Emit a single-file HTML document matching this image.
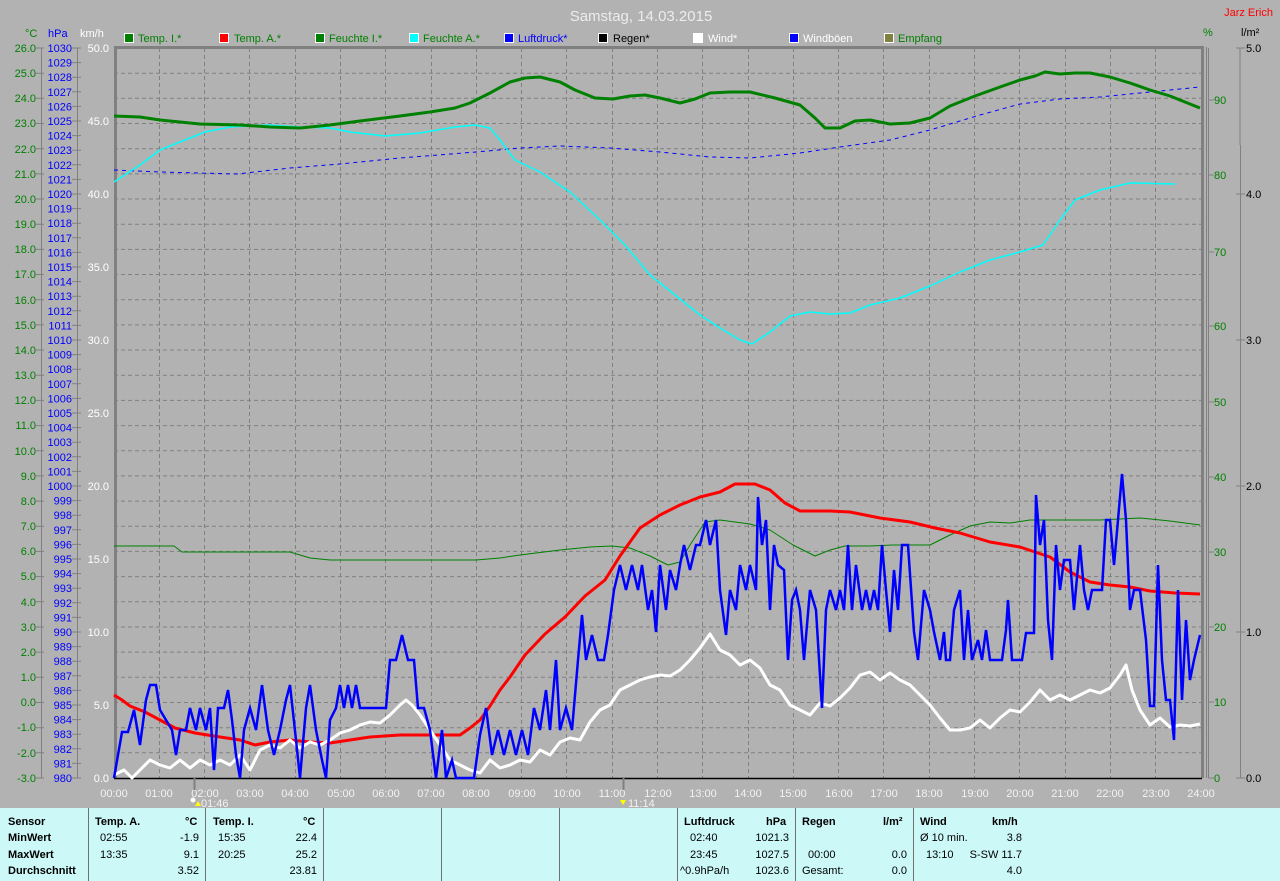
<!DOCTYPE html>
<html><head><meta charset="utf-8"><style>
body{margin:0;background:#b2b2b2;width:1280px;height:881px;overflow:hidden;font-family:"Liberation Sans",sans-serif}
svg{position:absolute;left:0;top:0}
#tbl{position:absolute;left:0;top:808px;width:1280px;height:73px;background:#ccf8f8;font-size:11px;color:#000}
#tbl div{position:absolute;white-space:nowrap}
.v{position:absolute;top:0;width:1px;height:73px;background:#707070}
.b{font-weight:bold}
</style></head><body>
<svg width="1280" height="808" font-family="Liberation Sans, sans-serif" font-size="11">
<text x="641" y="21" text-anchor="middle" font-size="15" fill="#ececec">Samstag, 14.03.2015</text>
<text x="1273" y="16" text-anchor="end" fill="#f00" font-size="11">Jarz Erich</text>
<!-- legend -->
<g font-size="11">
<rect x="124.5" y="33.5" width="9" height="9" fill="#008000" stroke="#fff"/><text x="138" y="42" fill="#008000">Temp. I.*</text>
<rect x="219.5" y="33.5" width="9" height="9" fill="#f00" stroke="#fff"/><text x="234" y="42" fill="#008000">Temp. A.*</text>
<rect x="315.5" y="33.5" width="9" height="9" fill="#008000" stroke="#fff"/><text x="329" y="42" fill="#008000">Feuchte I.*</text>
<rect x="409.5" y="33.5" width="9" height="9" fill="#0ff" stroke="#fff"/><text x="423" y="42" fill="#008000">Feuchte A.*</text>
<rect x="504.5" y="33.5" width="9" height="9" fill="#00f" stroke="#fff"/><text x="518" y="42" fill="#00f">Luftdruck*</text>
<rect x="598.5" y="33.5" width="9" height="9" fill="#000" stroke="#fff"/><text x="613" y="42" fill="#000">Regen*</text>
<rect x="693.5" y="33.5" width="9" height="9" fill="#fff" stroke="#fff"/><text x="708" y="42" fill="#fff">Wind*</text>
<rect x="789.5" y="33.5" width="9" height="9" fill="#00f" stroke="#fff"/><text x="803" y="42" fill="#fff">Windböen</text>
<rect x="884.5" y="33.5" width="9" height="9" fill="#808040" stroke="#fff"/><text x="898" y="42" fill="#008000">Empfang</text>
</g>
<text x="25" y="37" fill="#008000">°C</text><text x="48" y="37" fill="#00f">hPa</text><text x="80" y="37" fill="#fff">km/h</text>
<text x="1203" y="36" fill="#008000">%</text><text x="1241" y="36" fill="#000">l/m²</text>
<!-- grid -->
<g stroke="#808080" stroke-dasharray="4,3" stroke-width="1">
<path d="M114 73.2H1201M114 98.3H1201M114 123.5H1201M114 148.7H1201M114 173.9H1201M114 199H1201M114 224.2H1201M114 249.4H1201M114 274.5H1201M114 299.7H1201M114 324.9H1201M114 350H1201M114 375.2H1201M114 400.4H1201M114 425.6H1201M114 450.8H1201M114 475.9H1201M114 501.1H1201M114 526.3H1201M114 551.4H1201M114 576.6H1201M114 601.8H1201M114 627H1201M114 652.1H1201M114 677.3H1201M114 702.5H1201M114 727.7H1201M114 752.8H1201"/>
<path d="M159.5 48V778M204.5 48V778M249.5 48V778M295.5 48V778M340.5 48V778M385.5 48V778M431.5 48V778M476.5 48V778M521.5 48V778M566.5 48V778M612.5 48V778M657.5 48V778M702.5 48V778M748.5 48V778M793.5 48V778M838.5 48V778M883.5 48V778M929.5 48V778M974.5 48V778M1019.5 48V778M1065.5 48V778M1110.5 48V778M1155.5 48V778"/>
</g>
<path d="M115.5 778V47.5H1202.5V778" fill="none" stroke="#808080" stroke-width="3"/>
<path d="M1206.5 47V778" stroke="#808080" stroke-width="1"/>
<path d="M114 778.5H1202" stroke="#000" stroke-width="1.5"/>
<!-- axes -->
<g stroke="#808080"><path d="M41.5 48V778M77.5 48V778M1208.5 48V778M1240.5 145V778"/>
<path d="M36 48h8M36 73.2h8M36 98.3h8M36 123.5h8M36 148.7h8M36 173.9h8M36 199h8M36 224.2h8M36 249.4h8M36 274.5h8M36 299.7h8M36 324.9h8M36 350h8M36 375.2h8M36 400.4h8M36 425.6h8M36 450.8h8M36 475.9h8M36 501.1h8M36 526.3h8M36 551.4h8M36 576.6h8M36 601.8h8M36 627h8M36 652.1h8M36 677.3h8M36 702.5h8M36 727.7h8M36 752.8h8M36 778h8"/>
<path d="M72 48h9M72 62.6h9M72 77.2h9M72 91.8h9M72 106.4h9M72 121h9M72 135.6h9M72 150.2h9M72 164.8h9M72 179.4h9M72 194h9M72 208.6h9M72 223.2h9M72 237.8h9M72 252.4h9M72 267h9M72 281.6h9M72 296.2h9M72 310.8h9M72 325.4h9M72 340h9M72 354.6h9M72 369.2h9M72 383.8h9M72 398.4h9M72 413h9M72 427.6h9M72 442.2h9M72 456.8h9M72 471.4h9M72 486h9M72 500.6h9M72 515.2h9M72 529.8h9M72 544.4h9M72 559h9M72 573.6h9M72 588.2h9M72 602.8h9M72 617.4h9M72 632h9M72 646.6h9M72 661.2h9M72 675.8h9M72 690.4h9M72 705h9M72 719.6h9M72 734.2h9M72 748.8h9M72 763.4h9M72 778h9"/>
<path d="M1208 100h6M1208 175h6M1208 252h6M1208 326h6M1208 402h6M1208 477h6M1208 552h6M1208 627h6M1208 702h6M1208 778h6"/>
<path d="M1236 48h9M1236 194h9M1236 340h9M1236 486h9M1236 632h9M1236 778h9M1240 48V145"/>
</g>
<g fill="#008000" text-anchor="end">
<text x="36" y="52">26.0</text><text x="36" y="77">25.0</text><text x="36" y="102">24.0</text><text x="36" y="127">23.0</text><text x="36" y="153">22.0</text><text x="36" y="178">21.0</text><text x="36" y="203">20.0</text><text x="36" y="228">19.0</text><text x="36" y="253">18.0</text><text x="36" y="278">17.0</text><text x="36" y="304">16.0</text><text x="36" y="329">15.0</text><text x="36" y="354">14.0</text><text x="36" y="379">13.0</text><text x="36" y="404">12.0</text><text x="36" y="429">11.0</text><text x="36" y="455">10.0</text><text x="36" y="480">9.0</text><text x="36" y="505">8.0</text><text x="36" y="530">7.0</text><text x="36" y="555">6.0</text><text x="36" y="580">5.0</text><text x="36" y="606">4.0</text><text x="36" y="631">3.0</text><text x="36" y="656">2.0</text><text x="36" y="681">1.0</text><text x="36" y="706">0.0</text><text x="36" y="731">-1.0</text><text x="36" y="757">-2.0</text><text x="36" y="782">-3.0</text>
</g>
<g fill="#00f" text-anchor="end">
<text x="72" y="52">1030</text><text x="72" y="66.6">1029</text><text x="72" y="81.2">1028</text><text x="72" y="95.8">1027</text><text x="72" y="110.4">1026</text><text x="72" y="125">1025</text><text x="72" y="139.6">1024</text><text x="72" y="154.2">1023</text><text x="72" y="168.8">1022</text><text x="72" y="183.4">1021</text><text x="72" y="198">1020</text><text x="72" y="212.6">1019</text><text x="72" y="227.2">1018</text><text x="72" y="241.8">1017</text><text x="72" y="256.4">1016</text><text x="72" y="271">1015</text><text x="72" y="285.6">1014</text><text x="72" y="300.2">1013</text><text x="72" y="314.8">1012</text><text x="72" y="329.4">1011</text><text x="72" y="344">1010</text><text x="72" y="358.6">1009</text><text x="72" y="373.2">1008</text><text x="72" y="387.8">1007</text><text x="72" y="402.4">1006</text><text x="72" y="417">1005</text><text x="72" y="431.6">1004</text><text x="72" y="446.2">1003</text><text x="72" y="460.8">1002</text><text x="72" y="475.4">1001</text><text x="72" y="490">1000</text><text x="72" y="504.6">999</text><text x="72" y="519.2">998</text><text x="72" y="533.8">997</text><text x="72" y="548.4">996</text><text x="72" y="563">995</text><text x="72" y="577.6">994</text><text x="72" y="592.2">993</text><text x="72" y="606.8">992</text><text x="72" y="621.4">991</text><text x="72" y="636">990</text><text x="72" y="650.6">989</text><text x="72" y="665.2">988</text><text x="72" y="679.8">987</text><text x="72" y="694.4">986</text><text x="72" y="709">985</text><text x="72" y="723.6">984</text><text x="72" y="738.2">983</text><text x="72" y="752.8">982</text><text x="72" y="767.4">981</text><text x="72" y="782">980</text>
</g>
<g fill="#fff" text-anchor="end">
<text x="109" y="52">50.0</text><text x="109" y="125">45.0</text><text x="109" y="198">40.0</text><text x="109" y="271">35.0</text><text x="109" y="344">30.0</text><text x="109" y="417">25.0</text><text x="109" y="490">20.0</text><text x="109" y="563">15.0</text><text x="109" y="636">10.0</text><text x="109" y="709">5.0</text><text x="109" y="782">0.0</text>
</g>
<g fill="#008000">
<text x="1214" y="104">90</text><text x="1214" y="179">80</text><text x="1214" y="256">70</text><text x="1214" y="330">60</text><text x="1214" y="406">50</text><text x="1214" y="481">40</text><text x="1214" y="556">30</text><text x="1214" y="631">20</text><text x="1214" y="706">10</text><text x="1214" y="782">0</text>
</g>
<g fill="#000">
<text x="1246" y="52">5.0</text><text x="1246" y="198">4.0</text><text x="1246" y="344">3.0</text><text x="1246" y="490">2.0</text><text x="1246" y="636">1.0</text><text x="1246" y="782">0.0</text>
</g>
<g fill="#f2f2f2" text-anchor="middle">
<text x="114" y="797">00:00</text><text x="159" y="797">01:00</text><text x="205" y="797">02:00</text><text x="250" y="797">03:00</text><text x="295" y="797">04:00</text><text x="341" y="797">05:00</text><text x="386" y="797">06:00</text><text x="431" y="797">07:00</text><text x="476" y="797">08:00</text><text x="522" y="797">09:00</text><text x="567" y="797">10:00</text><text x="612" y="797">11:00</text><text x="658" y="797">12:00</text><text x="703" y="797">13:00</text><text x="748" y="797">14:00</text><text x="793" y="797">15:00</text><text x="839" y="797">16:00</text><text x="884" y="797">17:00</text><text x="929" y="797">18:00</text><text x="975" y="797">19:00</text><text x="1020" y="797">20:00</text><text x="1065" y="797">21:00</text><text x="1110" y="797">22:00</text><text x="1156" y="797">23:00</text><text x="1201" y="797">24:00</text>
</g>
<path d="M194.5 778V790M623.5 778V790" stroke="#808080" stroke-width="2"/>
<circle cx="193" cy="800" r="2.5" fill="#fff"/><path d="M195 806l3-5 3 5z" fill="#ff0"/><text x="201" y="807" fill="#f2f2f2">01:46</text>
<path d="M620 800l3 5 3-5z" fill="#ff0"/><text x="628" y="807" fill="#f2f2f2">11:14</text>
<!-- series -->
<g fill="none" stroke-linejoin="round">
<polyline stroke="#008000" stroke-width="1" points="114,546 174,546 182,552 220,552 290,552 310,558 330,560 476,560 500,558 520,555 560,550 590,547 612,546 630,548 650,556 668,565 680,562 690,545 705,522 720,520 735,522 750,524 770,530 793,545 815,556 830,550 845,546 870,546 893,545 930,545 950,535 970,526 990,522 1010,523 1030,520 1060,520 1100,520 1140,518 1170,521 1200,525"/>
<polyline stroke="#00f" stroke-width="1" stroke-dasharray="4,4" points="114,170 160,172 237,174 290,168 340,164 400,158 476,152 520,148 560,146 610,148 660,152 710,157 750,158 800,153 840,147 890,140 930,130 980,115 1020,104 1060,99 1100,97 1140,93 1170,90 1200,87"/>
<polyline stroke="#0ff" stroke-width="1.5" points="114,182 140,165 160,150 185,140 205,132 230,127 268,125 300,127 330,128 350,132 385,136 420,133 455,127 475,125 490,128 500,140 515,160 540,172 570,192 600,220 625,245 650,275 675,295 700,315 720,328 740,340 752,344 770,332 790,316 810,312 830,314 850,313 870,305 900,298 930,286 960,272 990,260 1020,252 1043,245 1060,220 1075,200 1100,190 1130,183 1175,184"/>
<polyline stroke="#f00" stroke-width="3" points="114,695 122,700 130,706 145,712 160,720 175,728 195,733 220,737 240,740 255,745 270,742 290,740 310,742 330,743 350,740 370,737 400,735 430,735 460,735 470,728 480,720 490,706 500,690 510,677 525,655 545,634 565,617 585,596 605,580 620,556 640,528 660,515 680,505 700,497 720,492 735,484 755,484 770,490 785,503 800,511 830,511 850,512 880,518 910,522 935,528 960,533 990,542 1020,547 1050,557 1070,572 1090,582 1110,585 1130,587 1150,591 1175,593 1200,594"/>
<polyline stroke="#008000" stroke-width="3" points="114,116 140,117 160,120 200,124 240,125 270,127 300,128 330,125 360,121 400,116 430,112 455,108 470,103 490,93 510,82 525,78 540,77 560,82 575,90 595,98 613,99 630,96 645,95 660,98 680,103 695,99 710,93 730,92 750,92 775,98 800,105 815,118 825,128 840,128 855,121 870,120 890,124 910,123 930,118 950,106 975,96 1000,87 1020,80 1035,76 1045,72 1060,74 1075,73 1090,73 1110,77 1130,83 1150,90 1170,96 1190,104 1200,108"/>
<polyline stroke="#fff" stroke-width="3" points="114,775 124,770 132,778 140,770 150,760 160,765 170,768 180,760 190,768 200,760 210,765 220,760 230,765 240,755 250,770 260,750 270,745 280,748 290,740 300,748 310,742 320,745 330,740 340,733 350,730 360,725 370,722 380,723 390,715 400,705 406,700 412,705 420,715 430,730 440,745 450,760 460,765 470,770 480,773 490,760 500,768 510,765 520,760 530,762 540,750 550,755 560,742 570,738 580,740 590,722 600,710 610,705 620,690 630,685 640,680 650,677 660,675 670,676 680,670 690,660 700,648 710,634 720,650 730,655 740,665 750,660 760,668 770,685 780,690 790,705 800,710 810,715 820,703 830,706 840,698 850,688 860,675 870,672 880,680 890,673 900,680 910,685 920,695 930,705 940,718 950,730 960,730 970,728 980,720 990,728 1000,718 1010,710 1020,712 1030,702 1040,690 1050,700 1060,695 1070,700 1080,695 1090,690 1100,693 1110,688 1120,675 1126,665 1132,690 1140,710 1150,725 1160,718 1170,727 1180,725 1190,726 1200,724"/>
<polyline stroke="#00f" stroke-width="2.5" stroke-linejoin="miter" points="114,778 122,732 128,732 134,710 140,745 146,700 150,685 156,685 160,710 166,720 172,730 176,755 180,730 186,730 190,708 196,730 200,708 206,730 210,708 214,770 218,708 224,708 228,690 232,720 236,755 240,778 244,730 250,708 256,730 262,685 268,730 274,755 280,730 286,700 290,685 296,740 300,778 306,708 310,685 316,730 322,760 326,778 330,720 336,708 340,685 344,708 348,685 352,708 356,685 360,708 366,708 372,708 378,708 386,708 390,660 396,660 402,635 408,660 414,660 418,708 424,708 430,730 436,778 442,730 446,778 452,760 456,778 462,778 468,778 474,778 480,735 486,708 492,755 498,730 504,755 510,730 516,755 522,730 528,755 534,708 540,730 546,690 550,730 556,660 560,730 566,708 572,730 578,660 582,615 586,660 592,635 598,660 604,660 608,635 614,590 620,565 626,590 632,565 638,590 642,565 648,610 652,590 656,632 660,565 666,610 670,570 676,590 680,565 684,545 690,570 696,545 700,545 706,520 710,545 716,520 720,590 726,635 730,590 736,610 740,565 746,590 750,565 756,590 758,497 762,545 766,520 770,610 774,545 778,565 784,570 788,660 792,600 796,590 800,610 804,660 810,590 816,610 822,708 826,610 830,590 836,610 840,590 844,610 848,545 852,610 856,565 862,610 866,590 870,610 874,590 878,610 882,545 886,590 890,632 894,570 898,610 902,545 908,545 914,632 918,660 924,590 930,610 934,632 940,660 944,632 946,660 950,660 954,610 960,590 964,660 968,610 972,660 978,640 982,660 986,630 990,660 996,660 1002,660 1006,630 1008,600 1012,660 1016,660 1022,660 1026,633 1034,633 1036,495 1040,545 1044,520 1048,620 1052,660 1056,545 1060,590 1064,560 1070,560 1074,610 1080,545 1084,590 1088,610 1092,590 1096,590 1102,590 1106,520 1110,520 1114,565 1118,520 1122,474 1126,520 1130,610 1134,590 1140,590 1146,640 1150,706 1154,706 1158,565 1162,660 1166,700 1170,700 1174,740 1178,590 1182,700 1186,620 1190,680 1194,660 1200,635"/>
</g>
</svg>
<div id="tbl">
<div class="v" style="left:88px"></div><div class="v" style="left:205px"></div><div class="v" style="left:323px"></div><div class="v" style="left:441px"></div><div class="v" style="left:559px"></div><div class="v" style="left:677px"></div><div class="v" style="left:795px"></div><div class="v" style="left:913px"></div>
<div class="b" style="left:8px;top:8px">Sensor</div><div class="b" style="left:8px;top:24px">MinWert</div><div class="b" style="left:8px;top:41px">MaxWert</div><div class="b" style="left:8px;top:57px">Durchschnitt</div>
<div class="b" style="left:95px;top:8px">Temp. A.</div><div class="b" style="left:185px;top:8px">°C</div>
<div style="left:100px;top:24px">02:55</div><div style="right:1081px;top:24px">-1.9</div>
<div style="left:100px;top:41px">13:35</div><div style="right:1081px;top:41px">9.1</div>
<div style="right:1081px;top:57px">3.52</div>
<div class="b" style="left:213px;top:8px">Temp. I.</div><div class="b" style="left:303px;top:8px">°C</div>
<div style="left:218px;top:24px">15:35</div><div style="right:963px;top:24px">22.4</div>
<div style="left:218px;top:41px">20:25</div><div style="right:963px;top:41px">25.2</div>
<div style="right:963px;top:57px">23.81</div>
<div class="b" style="left:684px;top:8px">Luftdruck</div><div class="b" style="left:766px;top:8px">hPa</div>
<div style="left:690px;top:24px">02:40</div><div style="right:491px;top:24px">1021.3</div>
<div style="left:690px;top:41px">23:45</div><div style="right:491px;top:41px">1027.5</div>
<div style="left:680px;top:57px">^0.9hPa/h</div><div style="right:491px;top:57px">1023.6</div>
<div class="b" style="left:802px;top:8px">Regen</div><div class="b" style="left:883px;top:8px">l/m²</div>
<div style="left:808px;top:41px">00:00</div><div style="right:373px;top:41px">0.0</div>
<div style="left:802px;top:57px">Gesamt:</div><div style="right:373px;top:57px">0.0</div>
<div class="b" style="left:920px;top:8px">Wind</div><div class="b" style="left:992px;top:8px">km/h</div>
<div style="left:920px;top:24px">Ø 10 min.</div><div style="right:258px;top:24px">3.8</div>
<div style="left:926px;top:41px">13:10</div><div style="right:258px;top:41px">S-SW 11.7</div>
<div style="right:258px;top:57px">4.0</div>
</div>
</body></html>
